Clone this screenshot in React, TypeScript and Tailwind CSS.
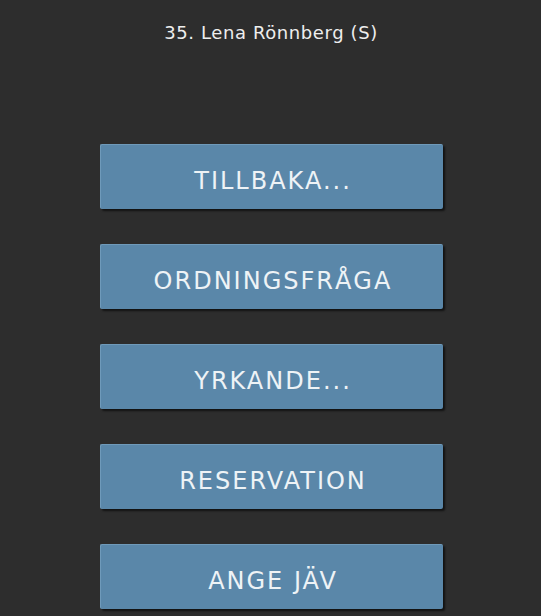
const actions = ['TILLBAKA...', 'ORDNINGSFRÅGA', 'YRKANDE...', 'RESERVATION', 'ANGE JÄV'];

export default function App() {
    return (
        <div className="min-h-[616px] bg-[#2d2d2d] font-['DejaVu_Sans',sans-serif]">
            <div className="pt-[21px] pl-[1px] text-center text-[18px] leading-[24px] tracking-[0.6px] text-[#eeeeee]">
                35. Lena Rönnberg (S)
            </div>
            <div className="mt-[99px] ml-[100px] flex w-[343px] flex-col gap-[35px]">
                {actions.map((label) => (
                    <button
                        key={label}
                        className="flex h-[65px] items-center justify-center rounded-[2px] border-t border-l border-[#6f9aba] bg-[#5a87a9] pt-[8px] pl-[2px] text-[24px] tracking-[2px] text-[#eef3f6] shadow-[2px_2px_2px_rgba(0,0,0,0.6)]"
                    >
                        {label}
                    </button>
                ))}
            </div>
        </div>
    );
}
